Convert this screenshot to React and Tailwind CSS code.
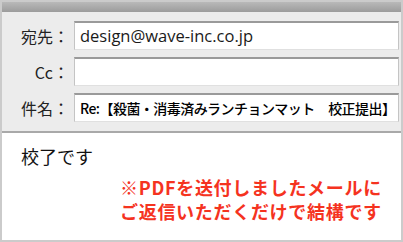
export default function App() {
  const jp = "font-['Noto_Sans_CJK_JP','Noto_Sans',sans-serif]";
  return (
    <div className="w-[403px] h-[242px] border-2 border-[#cbcbcb] bg-white flex flex-col overflow-hidden">
      <div className="h-[10px] shrink-0 bg-gradient-to-b from-[#b9b9b9] to-[#9c9c9c]" />
      <div className="shrink-0 bg-[#ececec] pt-[9px] pb-[9px] flex flex-col gap-[7px] border-b-2 border-[#a9a9a9]">
        <Row label="宛先：">
          <span className="font-['Open_Sans',sans-serif] text-[16.5px] text-[#1a1a1a]">design@wave-inc.co.jp</span>
        </Row>
        <Row label="Cc：" />
        <Row label="件名：">
          <span className={`${jp} text-[14px] font-medium text-black tracking-[-0.55px] whitespace-nowrap`}>
            Re:【殺菌・消毒済みランチョンマット　校正提出】
          </span>
        </Row>
      </div>
      <div className={`${jp} flex-1 pl-[19px] pt-[10px]`}>
        <div className="text-[18px] leading-[26px] text-[#111]">校了です</div>
        <div className="pl-[99px] pt-[6px] text-[18px] leading-[24px] font-bold text-[#f5331f] tracking-[0.7px] whitespace-nowrap">
          <div>※PDFを送付しましたメールに</div>
          <div>ご返信いただくだけで結構です</div>
        </div>
      </div>
    </div>
  );
}

function Row({ label, children }) {
  return (
    <div className="flex items-center h-[29px]">
      <div className="w-[72px] shrink-0 pr-[5px] text-right font-['Noto_Sans_CJK_JP','Noto_Sans',sans-serif] text-[16px] text-[#222]">
        {label}
      </div>
      <div className="w-[325px] h-full bg-white border border-[#c4c4c4] border-t-2 border-t-[#9a9a9a] border-b-[#e0e0e0] flex items-center pl-[5px] overflow-hidden">
        {children}
      </div>
    </div>
  );
}
